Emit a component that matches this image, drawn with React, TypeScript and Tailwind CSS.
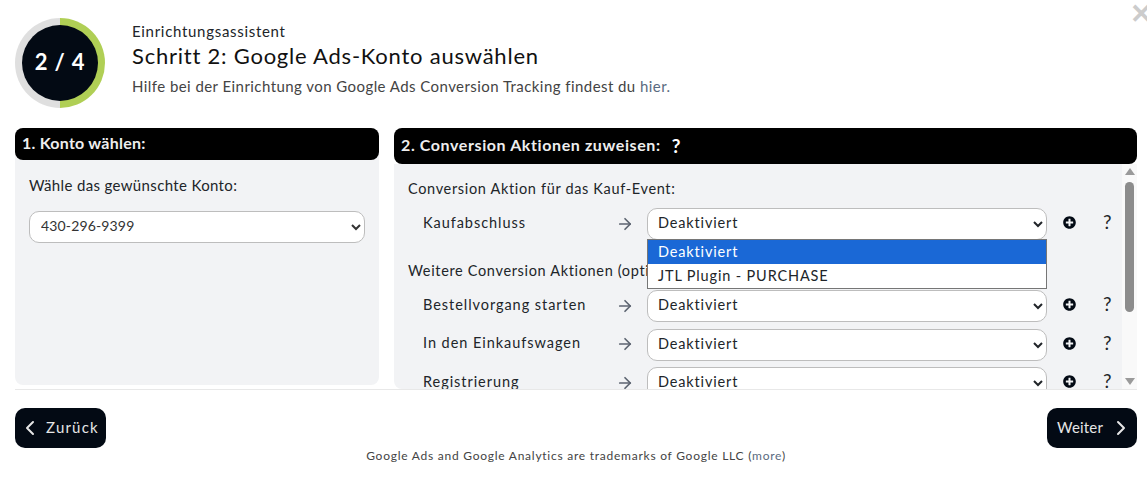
import { ArrowRight, ChevronLeft, ChevronRight } from "lucide-react";
import { FaPlusCircle } from "react-icons/fa";

const font = "font-['Lato','Open_Sans',sans-serif]";

function ActionSelect({ open }: { open?: boolean }) {
  return (
    <div className="relative w-[400px] shrink-0">
      <select className="h-[32px] w-full rounded-[10px] border border-[#bdbdbd] bg-white pb-[3px] pl-[6px] text-[14.5px] tracking-[0.85px] text-[#212529]">
        <option>Deaktiviert</option>
        <option>JTL Plugin - PURCHASE</option>
      </select>
      {open && (
        <div className="absolute top-[31px] left-0 z-10 w-full border border-[#767676] bg-white text-[14.5px] tracking-[0.85px] text-[#212529]">
          <div className="flex h-[24px] items-center bg-[#1a68d6] pl-[10px] text-white">Deaktiviert</div>
          <div className="flex h-[24px] items-center pl-[10px]">JTL Plugin - PURCHASE</div>
        </div>
      )}
    </div>
  );
}

function ActionRow({ label, open }: { label: string; open?: boolean }) {
  return (
    <div className="flex h-[32px] items-center">
      <span className="w-[208px] pb-[3px] pl-[15px] text-[14.5px] tracking-[0.95px] text-[#212529]">{label}</span>
      <span className="w-[31px] pb-[1px]">
        <ArrowRight className="size-[18px] text-[#5c6370]" strokeWidth={2.25} />
      </span>
      <ActionSelect open={open} />
      <span className="ml-[16px] pb-[3px]">
        <FaPlusCircle className="size-[13px] text-[#030a14]" />
      </span>
      <span className="ml-[27px] pb-[3px] text-[19px] text-[#212529]">?</span>
    </div>
  );
}

export default function App() {
  return (
    <div className={`relative h-[478px] w-[1147px] overflow-hidden bg-white ${font}`}>
      <span className="absolute top-[-1px] right-[-6px] text-[27px] leading-none font-black text-[#cccccc]">✕</span>

      <header className="flex h-[127px] items-start px-[15px] pt-[18px]">
        <div className="flex size-[90px] items-center justify-center rounded-full bg-[conic-gradient(#b0cf55_0_50%,#dfdfdf_50%_100%)]">
          <div className="flex size-[76px] items-center justify-center rounded-full bg-[#030a14] pb-[3px] text-[22px] font-bold tracking-[0.8px] text-white">
            2 / 4
          </div>
        </div>
        <div className="ml-[27px] pt-[4px]">
          <div className="text-[15px] leading-[18px] tracking-[0.7px] text-[#212529]">Einrichtungsassistent</div>
          <div className="mt-[3px] text-[22px] leading-[26px] tracking-[0.77px] text-[#111]">Schritt 2: Google Ads-Konto auswählen</div>
          <div className="mt-[8px] text-[15px] leading-[18px] tracking-[0.44px] text-[#444]">
            Hilfe bei der Einrichtung von Google Ads Conversion Tracking findest du{" "}
            <span className="text-[#5a6b80]">hier.</span>
          </div>
        </div>
      </header>

      <main className="mr-[10px] ml-[15px] flex h-[263px] gap-[15px] border-b border-[#e8e8e8] pt-[1px]">
        <section className="h-[257px] w-[364px] shrink-0 rounded-[8px] bg-[#f2f3f5]">
          <h2 className="flex h-[32px] items-center rounded-[8px] bg-black px-[7px] pb-[3px] text-[16px] font-bold tracking-[0.25px] text-[#eee]">
            1. Konto wählen:
          </h2>
          <div className="px-[14px] pt-[16px]">
            <div className="text-[15px] leading-[18px] tracking-[0.35px] text-[#212529]">Wähle das gewünschte Konto:</div>
            <select className="mt-[17px] h-[32px] w-full rounded-[10px] border border-[#bdbdbd] bg-white pb-[3px] pl-[7px] text-[14px] tracking-[0.15px] text-[#333]">
              <option>430-296-9399</option>
            </select>
          </div>
        </section>

        <section className="flex h-[261px] min-w-0 flex-1 flex-col">
          <h2 className="flex h-[36px] shrink-0 items-center rounded-[8px] bg-black px-[7px] pb-[3px] text-[16px] font-bold tracking-[0.6px] text-[#eee]">
            2. Conversion Aktionen zuweisen:
            <span className="mt-[4px] ml-[11px] text-[19px] font-bold text-white">?</span>
          </h2>
          <div className="flex min-h-0 flex-1">
            <div className="min-w-0 flex-1 overflow-hidden rounded-bl-[8px] bg-[#f2f3f5] pt-[16px] pl-[14px]">
              <div className="text-[14.5px] leading-[18px] tracking-[0.66px] text-[#212529]">Conversion Aktion für das Kauf-Event:</div>
              <div className="mt-[10px]">
                <ActionRow label="Kaufabschluss" open />
              </div>
              <div className="mt-[22px] text-[14.5px] leading-[18px] tracking-[0.66px] text-[#212529]">Weitere Conversion Aktionen (optional):</div>
              <div className="mt-[10px] flex flex-col gap-[6.5px]">
                <ActionRow label="Bestellvorgang starten" />
                <ActionRow label="In den Einkaufswagen" />
                <ActionRow label="Registrierung" />
              </div>
            </div>
            <div className="flex w-[15px] shrink-0 flex-col items-center bg-[#f9f9f9] pt-[4px] pb-[4px]">
              <svg width="10" height="7" viewBox="0 0 10 7" className="shrink-0"><path d="M5 0 10 7H0z" fill="#9a9a9a" /></svg>
              <div className="mt-[7px] h-[130px] w-[9px] rounded-full bg-[#8c8c8c]" />
              <svg width="10" height="7" viewBox="0 0 10 7" className="mt-auto shrink-0"><path d="M0 0h10L5 7z" fill="#9a9a9a" /></svg>
            </div>
          </div>
        </section>
      </main>

      <footer className="mr-[10px] ml-[15px] mt-[18px] flex items-start justify-between">
        <button className="flex h-[40px] w-[91px] items-center rounded-[10px] bg-[#030a14] pb-[1px] pl-[3px] text-[15px] tracking-[1.2px] text-[#e6e6e6]">
          <ChevronLeft className="size-[24px]" strokeWidth={2} />
          <span className="ml-[4px]">Zurück</span>
        </button>
        <button className="flex h-[40px] w-[90px] items-center rounded-[10px] bg-[#030a14] pb-[1px] pl-[10px] text-[15px] tracking-[0.2px] text-[#e6e6e6]">
          <span>Weiter</span>
          <ChevronRight className="ml-[6px] size-[24px]" strokeWidth={2} />
        </button>
      </footer>
      <p className="pl-[5px] text-center text-[12px] leading-[16px] tracking-[0.75px] text-[#444]">
        Google Ads and Google Analytics are trademarks of Google LLC (<span className="text-[#5a6b80]">more</span>)
      </p>
    </div>
  );
}
